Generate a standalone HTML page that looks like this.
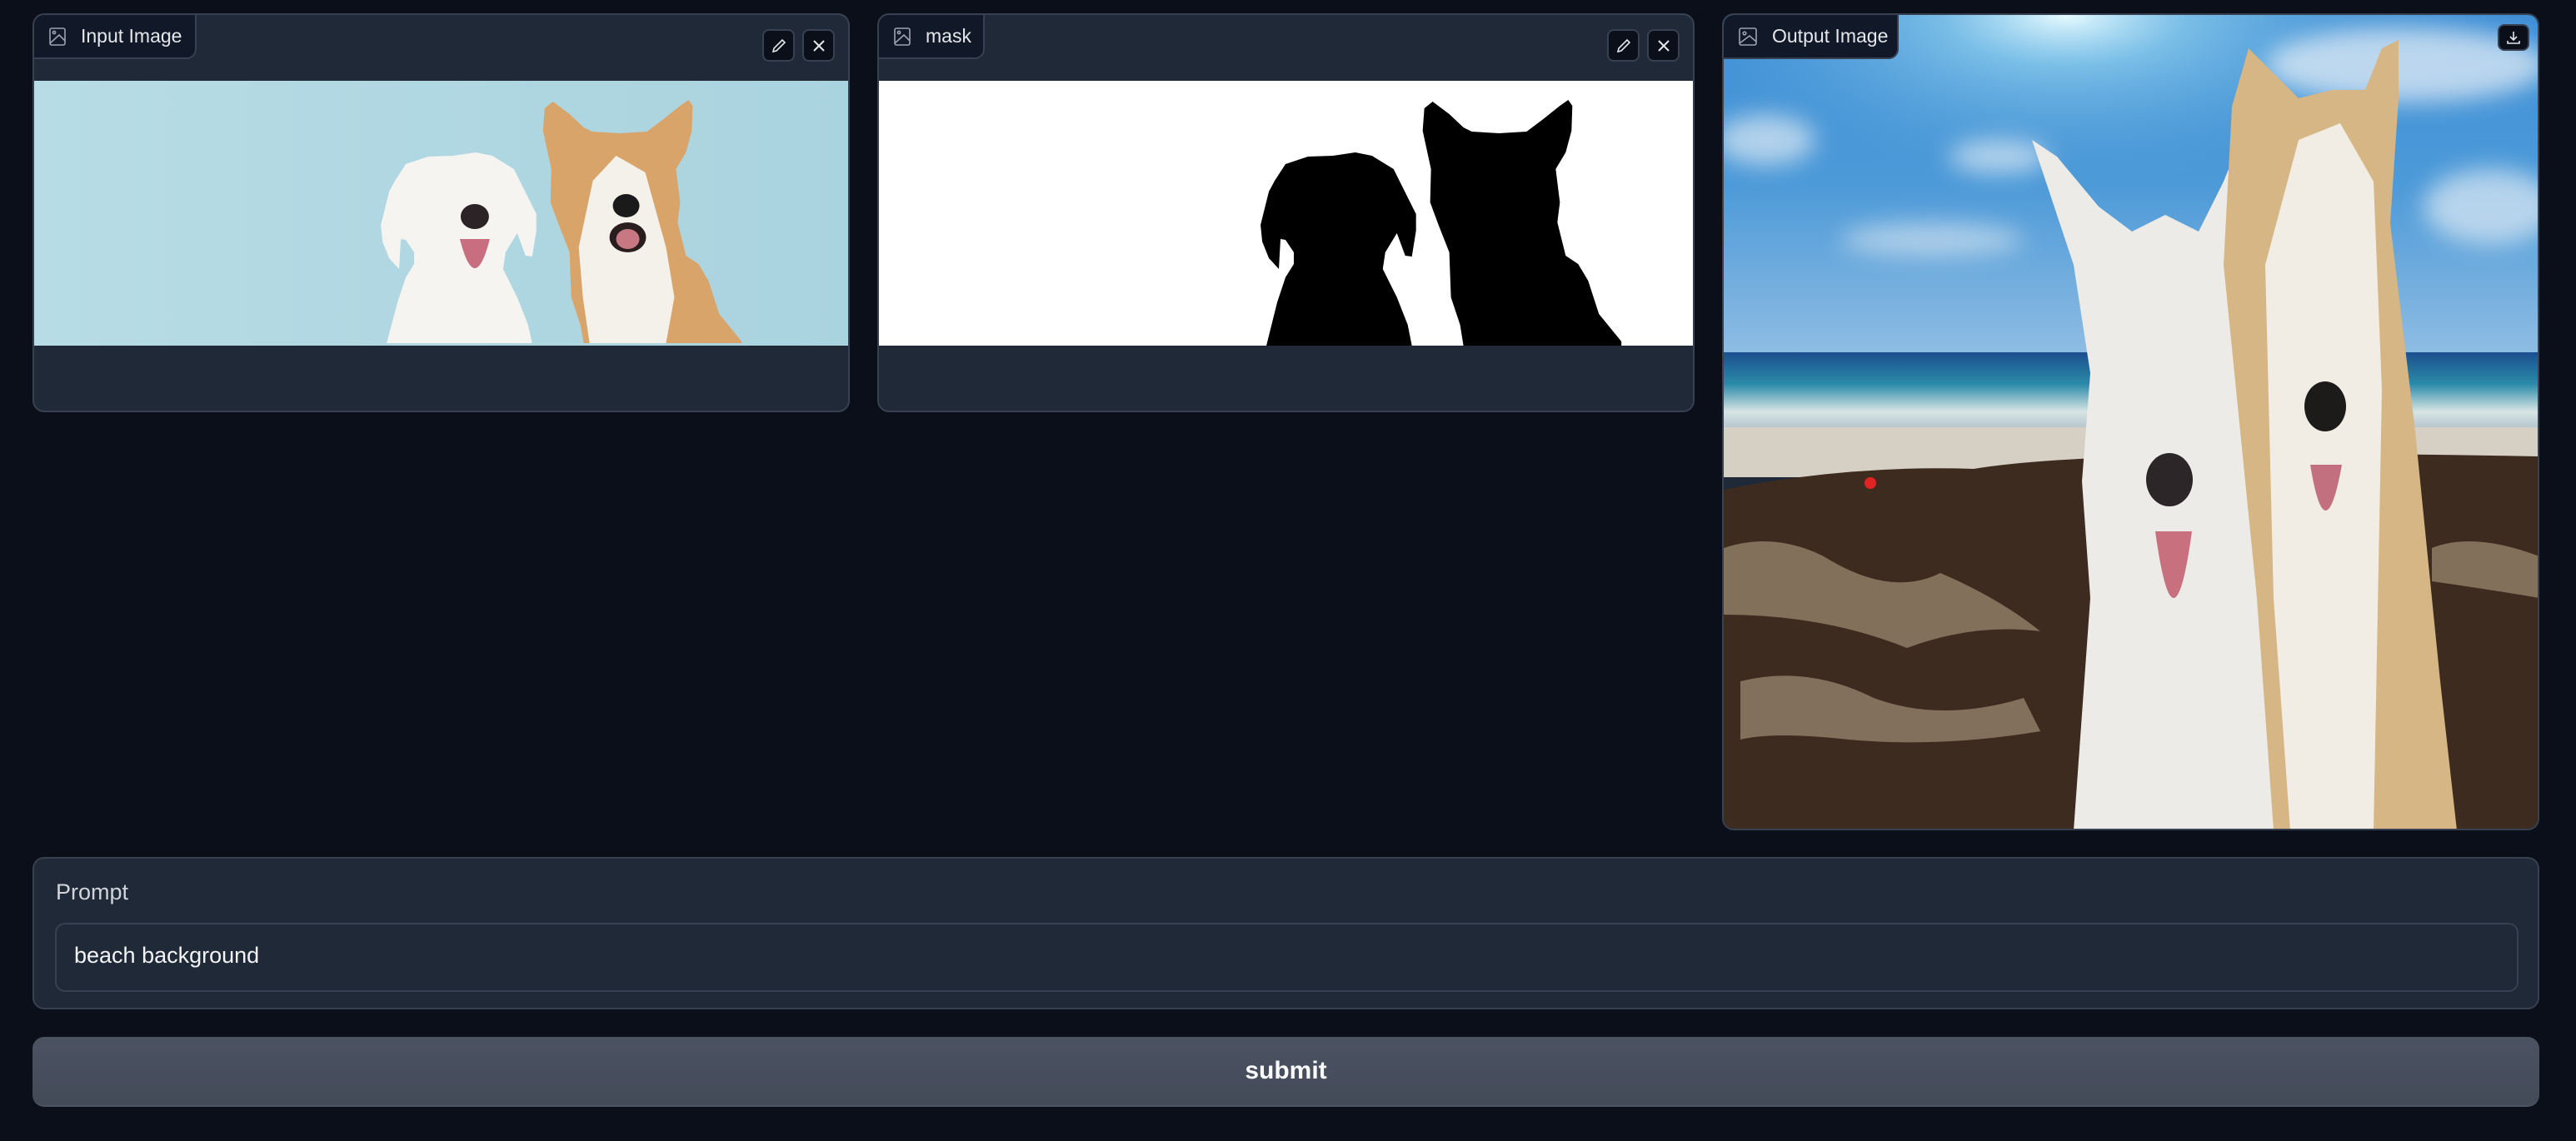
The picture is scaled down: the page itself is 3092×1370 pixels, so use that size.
<!DOCTYPE html>
<html><head><meta charset="utf-8"><style>
*{box-sizing:border-box;margin:0;padding:0}
body{width:3092px;height:1370px;background:#0b0f19;font-family:"Liberation Sans",sans-serif;position:relative;overflow:hidden;color:#e5e7eb}
.panel{position:absolute;background:#1f2937;border:2px solid #374151;border-radius:14px;overflow:hidden}
.tab{position:absolute;left:0;top:0;height:53px;background:#111827;border-right:2px solid #374151;border-bottom:2px solid #374151;border-bottom-right-radius:12px;display:flex;align-items:center;padding-left:18px;font-size:23px;color:#e5e7eb;z-index:3}
.tab svg{margin-right:18px}
.btn{position:absolute;width:39px;height:39px;background:#0b0f19;border:2px solid #374151;border-radius:8px;display:flex;align-items:center;justify-content:center;z-index:3}
.img{position:absolute;left:0;top:79px;width:100%;height:318px}
</style></head><body>

<!-- Input panel -->
<div class="panel" style="left:39px;top:16px;width:981px;height:479px">
 <div class="tab" style="width:195px"><svg width="20" height="22" viewBox="0 0 20 22" fill="none" stroke="#9ca3af" stroke-width="1.6"><rect x="1" y="1" width="18" height="20" rx="2"/><circle cx="6" cy="6" r="1.6"/><path d="M1 19 L12 9 L19 16"/></svg>Input Image</div>
 <div class="btn" style="left:874px;top:17px"><svg width="20" height="20" viewBox="0 0 20 20" fill="none" stroke="#e5e7eb" stroke-width="1.6"><path d="M3 17 L4 13 L14 3 L17 6 L7 16 Z"/></svg></div>
 <div class="btn" style="left:922px;top:17px"><svg width="20" height="20" viewBox="0 0 20 20" stroke="#e5e7eb" stroke-width="2"><path d="M4 4 L16 16 M16 4 L4 16"/></svg></div>
 <svg class="img" viewBox="0 0 979 318" preserveAspectRatio="none">
  <defs><linearGradient id="bl" x1="0" x2="1"><stop offset="0" stop-color="#b7dce5"/><stop offset="1" stop-color="#a9d3df"/></linearGradient></defs>
  <rect width="979" height="318" fill="url(#bl)"/>
  <path d="M661 315 L657 293 L646 260 L644 206 L631 173 L621 146 L622 106 L612 60 L614 33 L624 25 L644 40 L661 56 L671 61 L704 63 L737 61 L757 46 L777 30 L787 23 L792 30 L791 60 L784 86 L772 106 L777 146 L774 170 L784 210 L799 220 L811 240 L824 280 L851 313 L851 315 Z" fill="#d9a46a"/>
  <path d="M668 315 L660 260 L655 200 L672 120 L700 90 L735 110 L760 200 L770 260 L760 315 Z" fill="#f4f1ea"/>
  <ellipse cx="712" cy="150" rx="16" ry="14" fill="#1a1a1a"/>
  <ellipse cx="714" cy="188" rx="22" ry="18" fill="#2a1d1d"/><ellipse cx="714" cy="190" rx="14" ry="12" fill="#c87882"/>
  <path d="M424 315 L437 266 L447 236 L457 220 L457 206 L447 191 L441 190 L439 226 L427 213 L419 193 L417 173 L427 133 L434 120 L447 100 L474 91 L504 90 L531 86 L551 90 L577 106 L604 160 L604 180 L599 211 L591 210 L581 183 L567 206 L564 226 L581 260 L594 293 L599 315 Z" fill="#f5f4f1"/>
  <ellipse cx="530" cy="163" rx="17" ry="15" fill="#2b2325"/>
  <path d="M512 190 Q530 260 548 190 Z" fill="#c86e80"/>
 </svg>
</div>

<!-- Mask panel -->
<div class="panel" style="left:1053px;top:16px;width:981px;height:479px">
 <div class="tab" style="width:127px"><svg width="20" height="22" viewBox="0 0 20 22" fill="none" stroke="#9ca3af" stroke-width="1.6"><rect x="1" y="1" width="18" height="20" rx="2"/><circle cx="6" cy="6" r="1.6"/><path d="M1 19 L12 9 L19 16"/></svg>mask</div>
 <div class="btn" style="left:874px;top:17px"><svg width="20" height="20" viewBox="0 0 20 20" fill="none" stroke="#e5e7eb" stroke-width="1.6"><path d="M3 17 L4 13 L14 3 L17 6 L7 16 Z"/></svg></div>
 <div class="btn" style="left:922px;top:17px"><svg width="20" height="20" viewBox="0 0 20 20" stroke="#e5e7eb" stroke-width="2"><path d="M4 4 L16 16 M16 4 L4 16"/></svg></div>
 <svg class="img" viewBox="0 0 979 318" preserveAspectRatio="none">
  <rect width="979" height="318" fill="#fff"/>
  <path d="M466 318 L479 266 L489 236 L499 220 L499 206 L489 191 L483 190 L481 226 L469 213 L461 193 L459 173 L469 133 L476 120 L489 100 L516 91 L546 90 L573 86 L593 90 L619 106 L646 160 L646 180 L641 211 L633 210 L623 183 L609 206 L606 226 L623 260 L636 293 L641 318 Z" fill="#000"/>
  <path d="M703 318 L699 293 L688 260 L686 206 L673 173 L663 146 L664 106 L654 60 L656 33 L666 25 L686 40 L703 56 L713 61 L746 63 L779 61 L799 46 L819 30 L829 23 L834 30 L833 60 L826 86 L814 106 L819 146 L816 170 L826 210 L841 220 L853 240 L866 280 L893 313 L893 318 Z" fill="#000"/>
 </svg>
</div>

<!-- Output panel -->
<div class="panel" style="left:2067px;top:16px;width:981px;height:981px">
 <svg style="position:absolute;left:0;top:0" width="979" height="979" viewBox="0 0 979 979">
  <defs>
   <linearGradient id="sky" x1="0" y1="0" x2="0" y2="1"><stop offset="0" stop-color="#3f8fd6"/><stop offset="0.5" stop-color="#4d9ad8"/><stop offset="1" stop-color="#8fbde3"/></linearGradient>
   <radialGradient id="sun" cx="0.42" cy="0"><stop offset="0" stop-color="#e8fbff"/><stop offset="0.3" stop-color="#9fdcf2" stop-opacity="0.6"/><stop offset="1" stop-color="#4d9ad8" stop-opacity="0"/></radialGradient>
   <linearGradient id="sea" x1="0" y1="0" x2="0" y2="1"><stop offset="0" stop-color="#1b4f8e"/><stop offset="0.4" stop-color="#2a8aa8"/><stop offset="0.75" stop-color="#d7e5e4"/><stop offset="1" stop-color="#aebfc8"/></linearGradient>
   <filter id="bl2"><feGaussianBlur stdDeviation="14"/></filter>
  </defs>
  <rect width="979" height="410" fill="url(#sky)"/>
  <rect width="979" height="410" fill="url(#sun)"/>
  <g filter="url(#bl2)" opacity="0.7">
  <ellipse cx="50" cy="150" rx="60" ry="30" fill="#e0ebf4"/>
  <ellipse cx="330" cy="170" rx="60" ry="20" fill="#e0ebf4"/>
  <ellipse cx="250" cy="270" rx="110" ry="20" fill="#cfe0ee"/>
  <ellipse cx="820" cy="60" rx="170" ry="45" fill="#eef3f8"/>
  <ellipse cx="920" cy="230" rx="80" ry="45" fill="#e0ebf4"/>
  </g>
  <rect y="405" width="979" height="95" fill="url(#sea)"/>
  <rect y="495" width="979" height="60" fill="#d6cfc4"/>
  <path d="M0 570 Q150 540 300 545 Q450 520 979 530 L979 979 L0 979 Z" fill="#3e2b1f"/>
  <g fill="#a8957d" opacity="0.65">
  <path d="M0 640 Q60 620 120 650 Q200 700 260 670 Q330 700 380 740 Q300 730 220 760 Q120 720 0 720 Z"/>
  <path d="M20 800 Q100 780 180 820 Q260 850 360 820 L380 860 Q260 880 150 870 Q60 860 20 870 Z"/>
  <path d="M850 640 Q900 620 979 650 L979 700 Q920 690 850 680 Z"/>
  </g>
  <circle cx="176" cy="562" r="7" fill="#e02424"/>
  <!-- dogs -->
  <path d="M420 979 L440 700 L430 560 L440 430 L420 300 L390 210 L370 150 L400 170 L450 230 L490 260 L530 240 L570 260 L600 200 L620 150 L640 200 L650 300 L660 500 L680 700 L700 979 Z" fill="#ecebe8"/>
  <path d="M660 979 L640 700 L620 500 L600 300 L610 110 L630 40 L660 70 L690 100 L730 90 L770 90 L790 40 L810 30 L810 100 L800 250 L830 500 L860 800 L880 979 Z" fill="#d6b684"/>
  <path d="M680 979 L660 700 L650 300 L690 150 L740 130 L780 200 L790 450 L780 979 Z" fill="#f1ede4"/>
  <ellipse cx="535" cy="558" rx="28" ry="32" fill="#2c2628"/>
  <path d="M518 620 Q540 780 562 620 Z" fill="#c8707e"/>
  <ellipse cx="722" cy="470" rx="25" ry="30" fill="#1d1a1a"/>
  <path d="M704 540 Q722 650 742 540 Z" fill="#c27080"/>
 </svg>
 <div class="tab" style="width:210px;border-top-left-radius:12px">
  <svg width="22" height="22" viewBox="0 0 22 22" fill="none" stroke="#9ca3af" stroke-width="1.6"><rect x="1" y="1" width="20" height="20" rx="2"/><circle cx="7" cy="7" r="1.8"/><path d="M1 19 L13 10 L21 17"/></svg>Output Image</div>
 <div class="btn" style="left:929px;top:11px;width:38px;height:32px"><svg width="20" height="20" viewBox="0 0 20 20" fill="none" stroke="#e5e7eb" stroke-width="1.6"><path d="M10 3 L10 13 M6 9 L10 13 L14 9 M3 14 L3 17 L17 17 L17 14"/></svg></div>
</div>

<!-- Prompt -->
<div class="panel" style="left:39px;top:1029px;width:3009px;height:183px;overflow:visible">
 <div style="position:absolute;left:26px;top:25px;font-size:27px;color:#d1d5db">Prompt</div>
 <div style="position:absolute;left:25px;top:77px;width:2957px;height:83px;border:2px solid #374151;border-radius:12px;background:#1f2937;font-size:27px;color:#f3f4f6;padding:22px 0 0 21px">beach background</div>
</div>

<!-- Submit -->
<div style="position:absolute;left:39px;top:1245px;width:3009px;height:84px;border-radius:14px;background:linear-gradient(#4b5261,#434a58);border-bottom:2px solid #4b5563;display:flex;align-items:center;justify-content:center;font-size:30px;font-weight:bold;color:#f9fafb">submit</div>

</body></html>
